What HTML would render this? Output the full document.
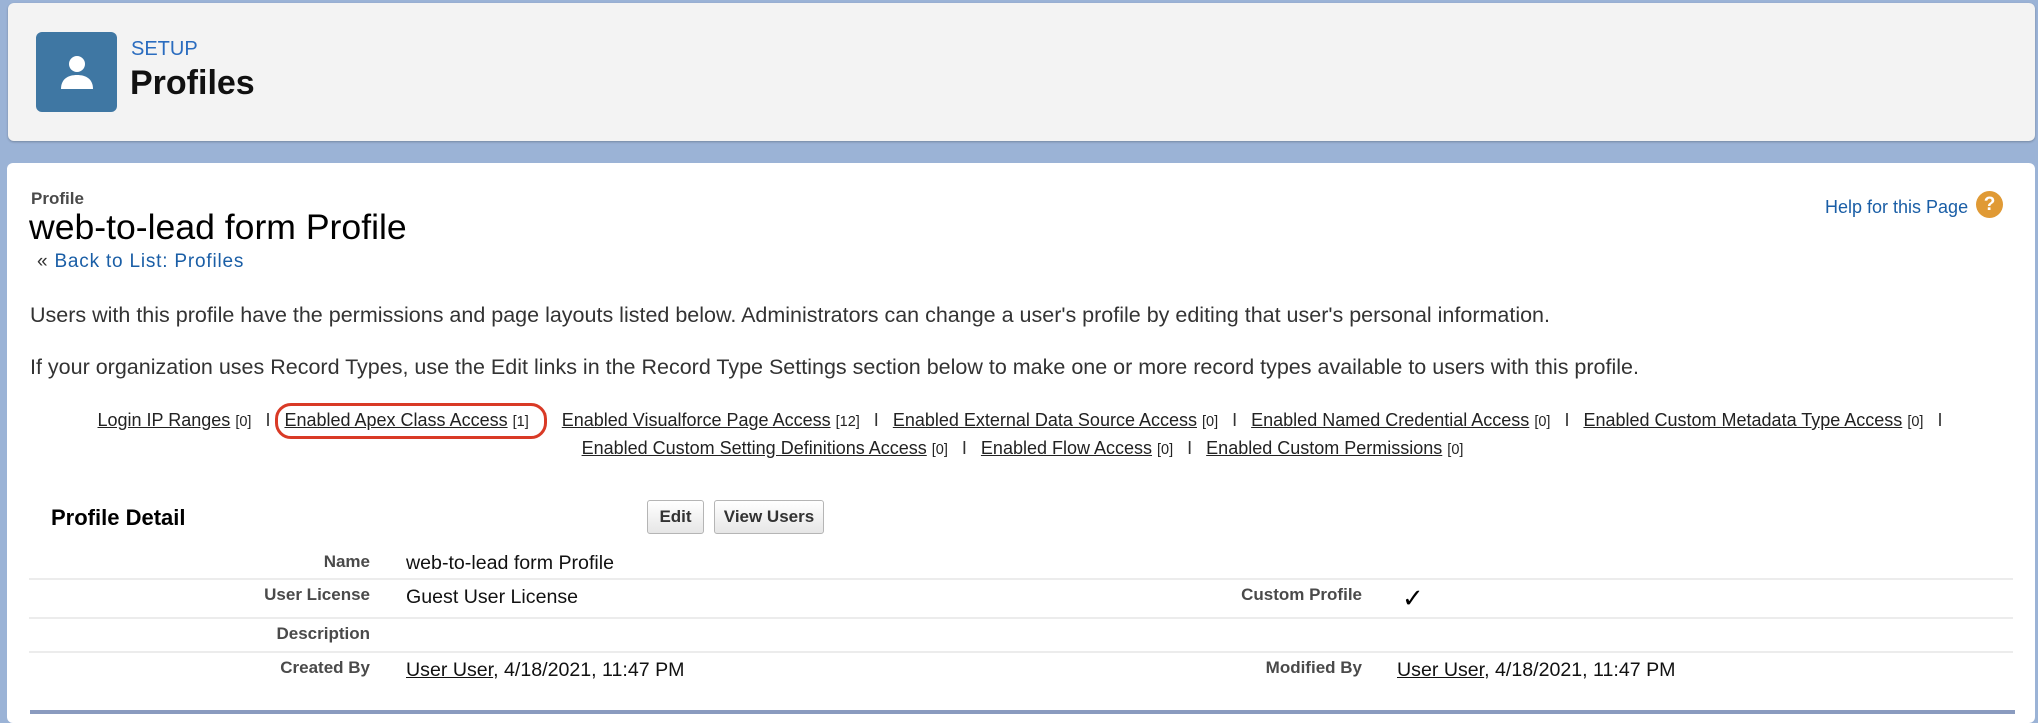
<!DOCTYPE html>
<html><head><style>
*{margin:0;padding:0;box-sizing:border-box}
body{width:2038px;height:714px;overflow:hidden;background:#9bb3d6;font-family:"Liberation Sans",Arial,sans-serif;position:relative}
.a{position:absolute;white-space:nowrap}
#hdr{left:8px;top:3px;width:2027px;height:138px;background:#f3f3f3;border-radius:6px;box-shadow:0 1px 2px rgba(0,0,0,.25)}
#main{left:7px;top:163px;width:2028px;height:560px;background:#fff;border-radius:6px}
.lbl{font-size:17px;font-weight:bold;color:#4a4a4a;text-align:right}
.val{font-size:19.6px;color:#111}
.hr{position:absolute;left:29px;width:1984px;height:2px;background:#ececec}
.lk{font-size:18px;color:#222}
.lk u{text-decoration:underline}
.lk small{font-size:14.5px}
.sep{color:#333;margin:0 14px}
.btn{position:absolute;top:500px;height:34px;border:1px solid #b5b5b5;border-radius:3px;background:linear-gradient(#fff,#e6e6e6);font-weight:bold;font-size:17px;color:#333;text-align:center;line-height:32px}
</style></head><body>
<div class="a" id="hdr"></div>
<div class="a" style="left:36px;top:32px;width:81px;height:80px;background:#3f77a3;border-radius:6px"></div>
<svg class="a" style="left:58px;top:53px" width="38" height="40" viewBox="0 0 38 40"><circle cx="19" cy="11" r="8" fill="#fff"/><path d="M3 36 C3 26 10 22 19 22 C28 22 35 26 35 36 Z" fill="#fff"/></svg>
<div class="a" style="left:131px;top:38px;font-size:20px;color:#2a6cbf">SETUP</div>
<div class="a" style="left:130px;top:64px;font-size:34px;font-weight:bold;color:#111">Profiles</div>
<div class="a" id="main"></div>
<div class="a" style="left:31px;top:189px;font-size:17px;font-weight:bold;color:#4a4a4a">Profile</div>
<div class="a" style="left:29px;top:207px;font-size:35.6px;color:#000">web-to-lead form Profile</div>
<div class="a" style="left:37px;top:251px;font-size:19px;letter-spacing:0.8px;color:#333">« <span style="color:#1a5ea6">Back to List: Profiles</span></div>
<div class="a" style="left:1825px;top:197px;font-size:18px;color:#1a5ea6">Help for this Page</div>
<div class="a" style="left:1976px;top:191px;width:27px;height:27px;border-radius:50%;background:#e09a35;color:#fff;font-weight:bold;font-size:19px;text-align:center;line-height:27px">?</div>
<div class="a" style="left:30px;top:303px;font-size:21.5px;color:#333">Users with this profile have the permissions and page layouts listed below. Administrators can change a user's profile by editing that user's personal information.</div>
<div class="a" style="left:30px;top:355px;font-size:21.5px;color:#333">If your organization uses Record Types, use the Edit links in the Record Type Settings section below to make one or more record types available to users with this profile.</div>
<div class="a lk" style="left:0;width:2054px;text-align:center;top:410px"><u>Login IP Ranges</u> <small>[0]</small><span class="sep">I</span><u>Enabled Apex Class Access</u> <small>[1]</small><span class="sep">I</span><u>Enabled Visualforce Page Access</u> <small>[12]</small><span class="sep">I</span><u>Enabled External Data Source Access</u> <small>[0]</small><span class="sep">I</span><u>Enabled Named Credential Access</u> <small>[0]</small><span class="sep">I</span><u>Enabled Custom Metadata Type Access</u> <small>[0]</small><span class="sep">I</span></div>
<div class="a lk" style="left:0;width:2045px;text-align:center;top:438px"><u>Enabled Custom Setting Definitions Access</u> <small>[0]</small><span class="sep">I</span><u>Enabled Flow Access</u> <small>[0]</small><span class="sep">I</span><u>Enabled Custom Permissions</u> <small>[0]</small></div>
<div class="a" style="left:275px;top:403px;width:272px;height:36px;border:3px solid #d93a26;border-radius:16px"></div>
<div class="a" style="left:51px;top:505px;font-size:22px;font-weight:bold;color:#000">Profile Detail</div>
<div class="btn" style="left:647px;width:57px">Edit</div>
<div class="btn" style="left:714px;width:110px">View Users</div>
<div class="a lbl" style="left:170px;width:200px;top:552px">Name</div>
<div class="a val" style="left:406px;top:552px">web-to-lead form Profile</div>
<div class="hr" style="top:578px"></div>
<div class="a lbl" style="left:170px;width:200px;top:585px">User License</div>
<div class="a val" style="left:406px;top:586px">Guest User License</div>
<div class="a lbl" style="left:1162px;width:200px;top:585px">Custom Profile</div>
<div class="a" style="left:1402px;top:583px;font-size:26px;color:#000">✓</div>
<div class="hr" style="top:617px"></div>
<div class="a lbl" style="left:170px;width:200px;top:624px">Description</div>
<div class="hr" style="top:651px"></div>
<div class="a lbl" style="left:170px;width:200px;top:658px">Created By</div>
<div class="a val" style="left:406px;top:659px"><u>User User</u>, 4/18/2021, 11:47 PM</div>
<div class="a lbl" style="left:1162px;width:200px;top:658px">Modified By</div>
<div class="a val" style="left:1397px;top:659px"><u>User User</u>, 4/18/2021, 11:47 PM</div>
<div class="a" style="left:30px;top:710px;width:1985px;height:4px;background:#8a9bbf"></div>
</body></html>
